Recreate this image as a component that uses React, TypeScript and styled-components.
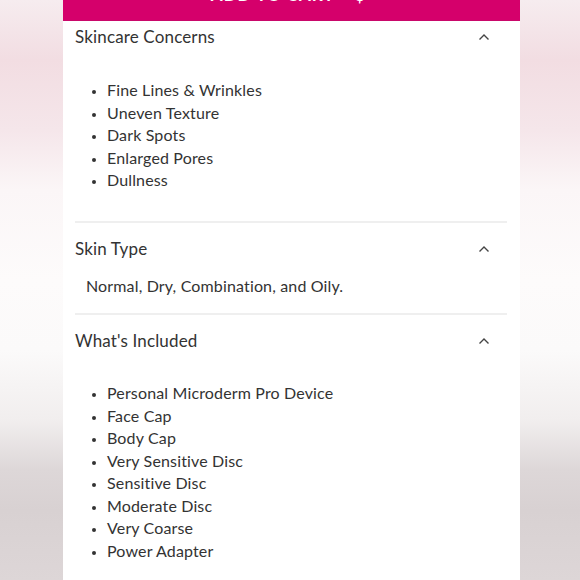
import React from "react";
import styled, { createGlobalStyle } from "styled-components";

const Global = createGlobalStyle`
  html, body { margin: 0; padding: 0; }
  body {
    width: 580px;
    height: 580px;
    overflow: hidden;
    font-family: Lato, "Open Sans", sans-serif;
    background: linear-gradient(180deg,
      #f6ecef 0px, #f2dde2 60px, #f5e6ea 130px, #fbf6f7 190px,
      #fdfbfb 280px, #fbfafa 350px, #f1eeee 420px, #ddd7d8 470px,
      #d8d1d2 510px, #ddd6d7 580px);
  }
`;

const Page = styled.div`
  width: 580px;
  height: 580px;
  display: flex;
  justify-content: center;
  overflow: hidden;
`;

const Panel = styled.div`
  width: 457px;
  margin-left: 3px;
  background: #ffffff;
  display: flex;
  flex-direction: column;
`;

const CartButton = styled.div`
  flex-shrink: 0;
  height: 21px;
  background: #d5006b;
  border-bottom: 1px solid #c9086a;
  box-sizing: border-box;
  overflow: hidden;
  display: flex;
  justify-content: center;
  align-items: flex-end;
`;

const CartLabel = styled.span`
  color: #ffffff;
  font-weight: 700;
  font-size: 17px;
  letter-spacing: 1px;
  line-height: 20px;
  margin-bottom: 15.5px;
  margin-right: 6px;
`;

const Body = styled.div`
  flex-shrink: 0;
  padding: 0 13px 0 12px;
`;

const Section = styled.section<{ $last?: boolean }>`
  border-bottom: ${(p) => (p.$last ? "none" : "2px solid #efefef")};
`;

const Header = styled.div<{ $first?: boolean }>`
  display: flex;
  justify-content: space-between;
  align-items: center;
  padding-top: ${(p) => (p.$first ? "4px" : "14px")};
  height: 24px;
`;

const Title = styled.h3`
  margin: 0;
  font-weight: 400;
  font-size: 17px;
  letter-spacing: 0.15px;
  line-height: 24px;
  color: #333333;
`;

const Chevron = styled.svg`
  width: 12px;
  height: 8px;
  margin-right: 17px;
`;

const List = styled.ul<{ $top?: number }>`
  margin: ${(p) => p.$top ?? 30}px 0 29px;
  padding-left: 32px;
  list-style: disc;
`;

const Item = styled.li`
  font-size: 16px;
  line-height: 22.5px;
  letter-spacing: 0.15px;
  color: #333333;
  &::marker { font-size: 13px; }
`;

const Para = styled.p`
  margin: 14px 0 16px 11px;
  font-size: 16px;
  line-height: 22.5px;
  letter-spacing: 0.15px;
  color: #333333;
`;

const Up = () => (
  <Chevron viewBox="0 0 12 8">
    <path d="M1.5 6.5 L6 2 L10.5 6.5" fill="none" stroke="#444" strokeWidth="1.4" />
  </Chevron>
);

const concerns = ["Fine Lines & Wrinkles", "Uneven Texture", "Dark Spots", "Enlarged Pores", "Dullness"];
const included = [
  "Personal Microderm Pro Device",
  "Face Cap",
  "Body Cap",
  "Very Sensitive Disc",
  "Sensitive Disc",
  "Moderate Disc",
  "Very Coarse",
  "Power Adapter",
];

export default function App() {
  return (
    <>
      <Global />
      <Page>
        <Panel>
          <CartButton>
            <CartLabel>ADD TO CART • $</CartLabel>
          </CartButton>
          <Body>
            <Section>
              <Header $first>
                <Title>Skincare Concerns</Title>
                <Up />
              </Header>
              <List>
                {concerns.map((c) => (
                  <Item key={c}>{c}</Item>
                ))}
              </List>
            </Section>
            <Section>
              <Header>
                <Title>Skin Type</Title>
                <Up />
              </Header>
              <Para>Normal, Dry, Combination, and Oily.</Para>
            </Section>
            <Section $last>
              <Header>
                <Title>What's Included</Title>
                <Up />
              </Header>
              <List $top={29}>
                {included.map((c) => (
                  <Item key={c}>{c}</Item>
                ))}
              </List>
            </Section>
          </Body>
        </Panel>
      </Page>
    </>
  );
}
